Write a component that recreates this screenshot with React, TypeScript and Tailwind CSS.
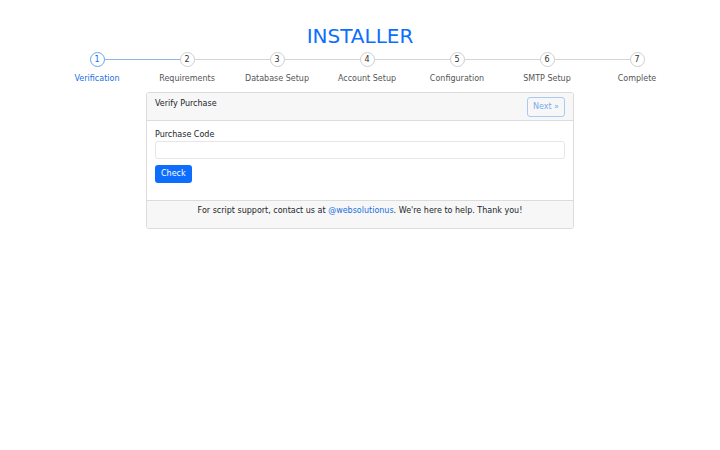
const steps = [
  'Verification',
  'Requirements',
  'Database Setup',
  'Account Setup',
  'Configuration',
  'SMTP Setup',
  'Complete',
]

function Stepper({ current }: { current: number }) {
  return (
    <div className="ml-[52px] flex w-[630px]">
      {steps.map((label, i) => {
        const active = i === current
        return (
          <div key={label} className="relative flex w-[90px] flex-col items-center">
            {i < steps.length - 1 ? (
              <div
                className={
                  'absolute left-[45px] top-[7px] h-px w-[90px] ' +
                  (i === current ? 'bg-[#8fb4e6]' : 'bg-[#d4d4d4]')
                }
              />
            ) : null}
            <div
              className={
                'relative z-10 flex h-[15px] w-[15px] items-center justify-center rounded-full border bg-white text-[8px] leading-none ' +
                (active ? 'border-[#6aa3ea] text-[#0d6efd]' : 'border-[#cfcfcf] text-[#333]')
              }
            >
              {i + 1}
            </div>
            <div
              className={
                'mt-[7px] whitespace-nowrap text-[8px] leading-[10px] ' +
                (active ? 'text-[#1a6fe0]' : 'text-[#555]')
              }
            >
              {label}
            </div>
          </div>
        )
      })}
    </div>
  )
}

export default function App() {
  return (
    <div className="min-h-[450px] w-[720px] bg-white font-['DejaVu_Sans',sans-serif] text-[#212529]">
      <h1 className="pt-[24px] text-center text-[20px] leading-[24px] text-[#0d6efd]">
        INSTALLER
      </h1>
      <div className="mt-[4px]">
        <Stepper current={0} />
      </div>
      <div className="mx-auto mt-[8px] w-[428px] overflow-hidden rounded-[3px] border border-[#dcdcdc]">
        <div className="flex items-start justify-between border-b border-[#dcdcdc] bg-[#f7f7f7] px-[8px] pb-[3px] pt-[4px]">
          <div className="pt-[1px] text-[8px] leading-[12px]">Verify Purchase</div>
          <button className="h-[20px] rounded-[3px] border border-[#a8cbf5] px-[5px] text-[8px] text-[#79aced]">
            Next »
          </button>
        </div>
        <div className="bg-white px-[8px] pb-[17px] pt-[8px]">
          <label className="block text-[8px] leading-[12px]">Purchase Code</label>
          <input
            type="text"
            className="block h-[18px] w-full rounded-[3px] border border-[#e6e6e6] bg-white px-[6px] text-[8px] outline-none"
          />
          <button className="mt-[4px] h-[18px] rounded-[3px] bg-[#0d6efd] px-[6px] text-[8px] text-white">
            Check
          </button>
        </div>
        <div className="border-t border-[#dcdcdc] bg-[#f7f7f7] px-[8px] pb-[11px] pt-[4px] text-center text-[8px] leading-[12px]">
          For script support, contact us at{' '}
          <span className="text-[#1a6fe0]">@websolutionus</span>. We're here to help. Thank you!
        </div>
      </div>
    </div>
  )
}
